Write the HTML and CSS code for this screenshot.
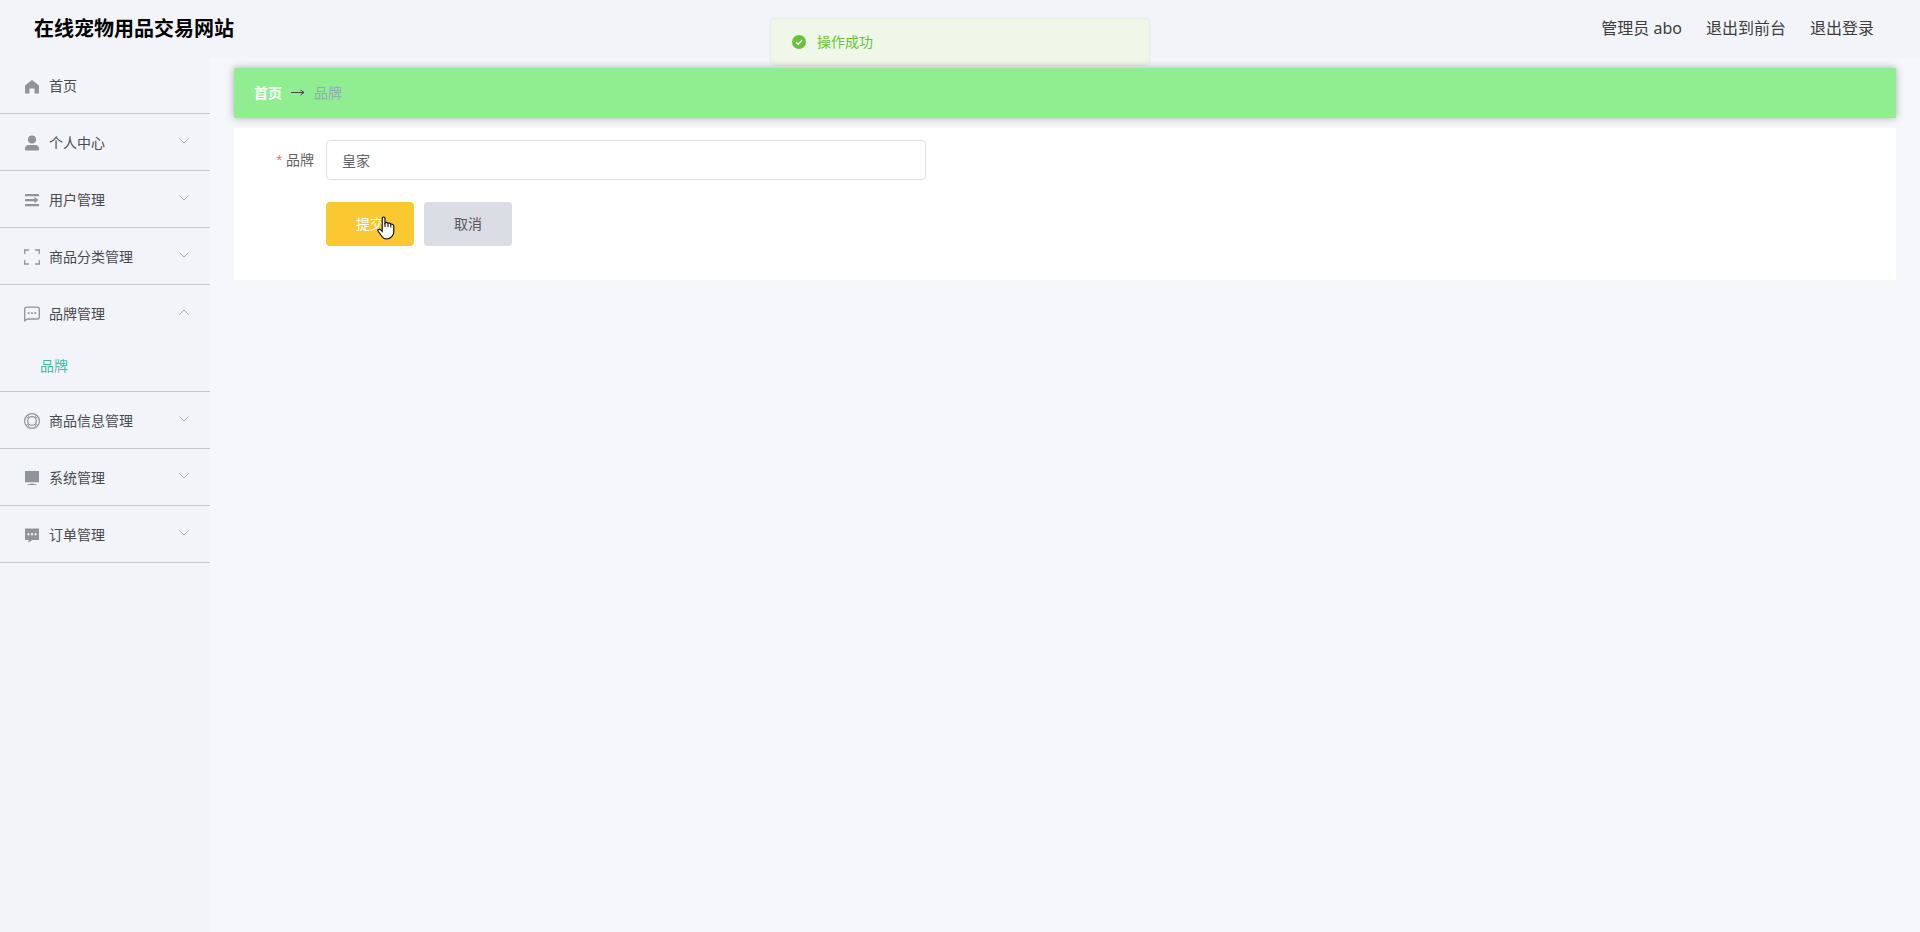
FILE: index.html
```html
<!DOCTYPE html>
<html lang="zh-CN">
<head>
<meta charset="UTF-8">
<meta name="viewport" content="width=device-width, initial-scale=1.0">
<title>在线宠物用品交易网站</title>
<link rel="stylesheet" href="styles.css">
</head>
<body>

<header class="header">
    <h1 class="title">在线宠物用品交易网站</h1>
    <div class="right-menu">
        <span>管理员 abo</span>
        <a href="#">退出到前台</a>
        <a href="#">退出登录</a>
    </div>
</header>

<div class="message" role="alert">
    <svg class="message-icon" viewBox="0 0 14 14"><circle cx="7" cy="7" r="7" fill="#67c23a"/><path d="M4 7.2l2.2 2.1L10.2 5" fill="none" stroke="#fff" stroke-width="1.3"/></svg>
    <p>操作成功</p>
</div>

<div class="container">
    <nav class="sidebar">
        <a class="menu-item menu-home" href="#">
            <svg class="icon" viewBox="0 0 18 18"><path d="M9 2l7 5.6V15.500h-4.500V10.500h-5v5H2V7.600z" fill="#909399"/></svg>
            <span>首页</span>
        </a>
        <div class="submenu">
            <a class="menu-item" href="#">
                <svg class="icon" viewBox="0 0 18 18" fill="#909399"><circle cx="9" cy="5.500" r="4"/><path d="M2 16.500v-1.500q0-4 4-4h6q4 0 4 4v1.500z"/></svg>
                <span>个人中心</span>
                <svg class="arrow" viewBox="0 0 12 12"><path d="M1.500 3.500L6 8l4.500-4.500"/></svg>
            </a>
        </div>
        <div class="submenu">
            <a class="menu-item" href="#">
                <svg class="icon" viewBox="0 0 18 18" fill="#909399"><path d="M2 3h14v2.300H2zM2 8h9.500v2.300H2zM2 13h14v2.300H2zM11.500 6l4 3.100-4 3.100z"/></svg>
                <span>用户管理</span>
                <svg class="arrow" viewBox="0 0 12 12"><path d="M1.500 3.500L6 8l4.500-4.500"/></svg>
            </a>
        </div>
        <div class="submenu">
            <a class="menu-item" href="#">
                <svg class="icon" viewBox="0 0 18 18" fill="none" stroke="#909399" stroke-width="1.3"><path d="M1.700 6V2H6M12 2h4.300v4M16.300 12v4H12M6 16H1.700v-4"/></svg>
                <span>商品分类管理</span>
                <svg class="arrow" viewBox="0 0 12 12"><path d="M1.500 3.500L6 8l4.500-4.500"/></svg>
            </a>
        </div>
        <div class="submenu">
            <a class="menu-item" href="#">
                <svg class="icon" viewBox="0 0 18 18" fill="none" stroke="#909399" stroke-width="1.3"><path d="M1.700 15.800V4.200q0-2 2-2h10.600q2 0 2 2v7.800q0 2-2 2H4.300z"/><path d="M4.800 8.200h1.800M8.100 8.200h1.800M11.400 8.200h1.800" stroke-width="1.800"/></svg>
                <span>品牌管理</span>
                <svg class="arrow" viewBox="0 0 12 12"><path d="M1.500 8.500L6 4l4.500 4.500"/></svg>
            </a>
            <a class="sub-item" href="#">品牌</a>
        </div>
        <div class="submenu">
            <a class="menu-item" href="#">
                <svg class="icon" viewBox="0 0 18 18" fill="none" stroke="#909399" stroke-width="1.2"><circle cx="9" cy="9" r="7.400"/><circle cx="9" cy="9" r="4.300"/><path d="M3 4.700l2.700 1.700M4.700 3l1.700 2.700M15 4.700l-2.700 1.700M13.300 3l-1.700 2.700M3 13.300l2.700-1.700M4.700 15l1.700-2.700M15 13.300l-2.700-1.700M13.300 15l-1.700-2.700" stroke-width="0.900"/></svg>
                <span>商品信息管理</span>
                <svg class="arrow" viewBox="0 0 12 12"><path d="M1.500 3.500L6 8l4.500-4.500"/></svg>
            </a>
        </div>
        <div class="submenu">
            <a class="menu-item" href="#">
                <svg class="icon" viewBox="0 0 18 18" fill="#909399"><path d="M2 2h14v11.200H2zM4 16q1-1.400 5-1.600 4 .2 5 1.600z"/></svg>
                <span>系统管理</span>
                <svg class="arrow" viewBox="0 0 12 12"><path d="M1.500 3.500L6 8l4.500-4.500"/></svg>
            </a>
        </div>
        <div class="submenu">
            <a class="menu-item" href="#">
                <svg class="icon" viewBox="0 0 18 18"><path d="M2 2.500h14v11.500H9.500L5.500 16.500V14H2z" fill="#909399"/><path d="M4.500 8.200h2M8 8.200h2M11.500 8.200h2" stroke="#f3f4f9" stroke-width="2"/></svg>
                <span>订单管理</span>
                <svg class="arrow" viewBox="0 0 12 12"><path d="M1.500 3.500L6 8l4.500-4.500"/></svg>
            </a>
        </div>
    </nav>

    <main class="main">
        <div class="breadcrumb">
            <a href="#">首页</a>
            <svg class="separator" viewBox="0 0 14 14"><path d="M0 6.500h12.500M9.500 4l3.500 2.500L9.500 9" fill="none" stroke="#3f4a45"/></svg>
            <span>品牌</span>
        </div>
        <form class="form">
            <div class="form-item">
                <label for="brand"><span class="required">*</span>品牌</label>
                <input type="text" id="brand" value="皇家">
            </div>
            <div class="form-buttons">
                <button type="button" class="btn btn-submit">提交
                    <svg class="pointer" viewBox="0 0 18 24"><path d="M5.200 13.500V2.500q0-1.500 1.400-1.500T8 2.500V7q.5-.8 1.600-.6 1.100.1 1.300 1 .7-.6 1.600-.3 1 .2 1.200 1.200.7-.5 1.700-.1 1.400.5 1.400 2v5.300q0 3-1.800 4.900Q12.500 23 9.700 23 6.500 23 5 20.500L1.300 15.500Q.4 14 1.500 13.300q1-.6 2.300.6l1.400 1.500z" fill="#fff" stroke="#000" stroke-width="1.100"/><path d="M8 7v4M11 7.500v3.500M13.800 8.500v3" stroke="#000"/></svg>
                </button>
                <button type="button" class="btn btn-cancel">取消</button>
            </div>
        </form>
    </main>
</div>

</body>
</html>
```
FILE: styles.css
```css
* {
    box-sizing: border-box;
}
body {
    margin: 0;
    min-height: 100vh;
    display: flex;
    flex-direction: column;
    font-family: "Noto Sans", "Noto Sans CJK SC", sans-serif;
    font-size: 14px;
    color: #484a4f;
    background-color: #f5f7fb;
}
a {
    color: inherit;
    text-decoration: none;
}
.header {
    display: flex;
    align-items: center;
    justify-content: space-between;
    height: 58px;
    padding: 0 46px 0 34px;
    background-color: #f3f4f9;
}
.title {
    margin: 0;
    font-size: 20px;
    line-height: 28px;
    color: #000;
}
.right-menu {
    display: flex;
    gap: 24px;
    font-size: 16px;
    line-height: 24px;
    padding-bottom: 2px;
    color: #3c3c3c;
}
/* komunikat po zapisie */
.message {
    position: absolute;
    top: 18px;
    left: 50%;
    transform: translateX(-50%);
    display: flex;
    align-items: center;
    gap: 11px;
    width: 380px;
    height: 48px;
    padding: 0 21px;
    border: 1px solid #e1f3d8;
    border-radius: 4px;
    background-color: #eef7e8;
    color: #67c23a;
}
.message p {
    margin: 0;
    padding-bottom: 2px;
}
.message-icon {
    width: 14px;
    height: 14px;
}
.container {
    flex: 1;
    display: flex;
}
.sidebar {
    width: 210px;
    background-color: #f3f4f9;
}
.menu-item {
    display: flex;
    align-items: center;
    height: 56px;
    padding: 0 20px;
}
.menu-home,
.submenu {
    border-bottom: 1px solid #c6c7cc;
}
.menu-home span {
    padding-bottom: 2px;
}
.icon {
    width: 18px;
    height: 18px;
    margin: 2px 8px 0 3px;
}
.arrow {
    width: 12px;
    height: 12px;
    margin: 0 0 2px auto;
    fill: none;
    stroke: #a5a7ac;
}
.sub-item {
    display: block;
    padding-left: 40px;
    line-height: 50px;
    color: #3dbda7;
}
.main {
    flex: 1;
    padding: 10px 24px;
}
.breadcrumb {
    position: relative;
    display: flex;
    align-items: center;
    gap: 9px;
    height: 50px;
    padding: 0 20px 2px;
    margin-bottom: 10px;
    background-color: #90ee90;
    box-shadow: 0 0 8px rgba(0, 0, 0, 0.3);
    color: #97a8be;
}
.breadcrumb a {
    color: #fff;
    font-weight: bold;
}
.separator {
    width: 14px;
    height: 14px;
    margin-top: 2px;
}
.form {
    position: relative;
    padding: 12px 12px 34px;
    background-color: #fff;
}
.form-item {
    display: flex;
    align-items: center;
    margin-bottom: 22px;
}
.form-item label {
    width: 80px;
    padding: 0 12px 2px 0;
    text-align: right;
    color: #606266;
}
.required {
    margin-right: 4px;
    font-family: "Liberation Sans", sans-serif;
    color: #f56c6c;
}
.form-item input {
    width: 600px;
    height: 40px;
    padding: 0 15px;
    border: 1px solid #dcdfe6;
    border-radius: 4px;
    font: inherit;
    color: #606266;
}
.form-buttons {
    display: flex;
    gap: 10px;
    padding-left: 80px;
}
.btn {
    position: relative;
    width: 88px;
    height: 44px;
    padding: 0 0 2px;
    border: none;
    border-radius: 4px;
    font: inherit;
    cursor: pointer;
}
.btn-submit {
    background-color: #fac830;
    color: #fff;
}
.btn-cancel {
    background-color: #dadde4;
    color: #55575c;
}
.pointer {
    position: absolute;
    left: 51px;
    top: 14px;
    width: 18px;
    height: 24px;
    fill: none;
}
```
